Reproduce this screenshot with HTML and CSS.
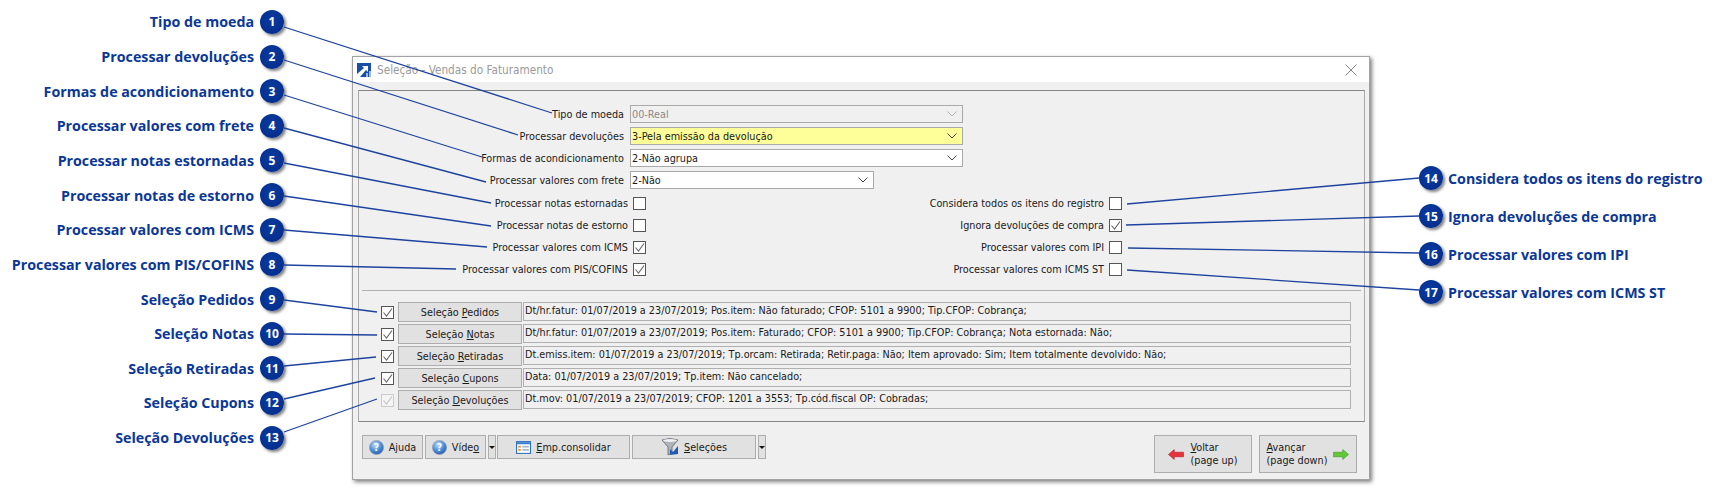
FILE: index.html
```html
<!DOCTYPE html>
<html lang="pt-BR">
<head>
<meta charset="utf-8">
<title>Seleção - Vendas do Faturamento</title>
<link rel="stylesheet" href="styles.css">
</head>
<body>
<div class="page">
  <div class="callouts-left">
    <div class="callout"><span class="callout-text">Tipo de moeda</span><span class="badge">1</span></div>
    <div class="callout"><span class="callout-text">Processar devoluções</span><span class="badge">2</span></div>
    <div class="callout"><span class="callout-text">Formas de acondicionamento</span><span class="badge">3</span></div>
    <div class="callout"><span class="callout-text">Processar valores com frete</span><span class="badge">4</span></div>
    <div class="callout"><span class="callout-text">Processar notas estornadas</span><span class="badge">5</span></div>
    <div class="callout"><span class="callout-text">Processar notas de estorno</span><span class="badge">6</span></div>
    <div class="callout"><span class="callout-text">Processar valores com ICMS</span><span class="badge">7</span></div>
    <div class="callout"><span class="callout-text">Processar valores com PIS/COFINS</span><span class="badge">8</span></div>
    <div class="callout"><span class="callout-text">Seleção Pedidos</span><span class="badge">9</span></div>
    <div class="callout"><span class="callout-text">Seleção Notas</span><span class="badge">10</span></div>
    <div class="callout"><span class="callout-text">Seleção Retiradas</span><span class="badge">11</span></div>
    <div class="callout"><span class="callout-text">Seleção Cupons</span><span class="badge">12</span></div>
    <div class="callout"><span class="callout-text">Seleção Devoluções</span><span class="badge">13</span></div>
  </div>

  <div class="dialog">
    <div class="titlebar">
      <svg class="app-icon" viewBox="0 0 14 14"><rect width="14" height="14" fill="#1a4fa8"/><path d="M0 14 L0 11 L7 5 L5 3 L11 3 L11 9 L9 7 L3 14Z" fill="#fff"/><rect x="9" y="10" width="2" height="4" fill="#9db8dc"/><rect x="12" y="8" width="2" height="6" fill="#9db8dc"/></svg>
      <span class="title-text">Seleção - Vendas do Faturamento</span>
      <svg class="close-icon" viewBox="0 0 12 12"><path d="M0.5 0.5 L11.5 11.5 M11.5 0.5 L0.5 11.5" stroke="#8a8a8a" stroke-width="1" fill="none"/></svg>
    </div>
    <div class="panel">
      <div class="form-row">
        <span class="label w-main">Tipo de moeda</span>
        <div class="combo combo-disabled"><span>00-Real</span><svg class="chev" viewBox="0 0 10 6"><path d="M0.5 0.5 L5 5 L9.5 0.5" stroke="#b0b0b0" fill="none"/></svg></div>
      </div>
      <div class="form-row">
        <span class="label w-main">Processar devoluções</span>
        <div class="combo combo-yellow"><span>3-Pela emissão da devolução</span><svg class="chev" viewBox="0 0 10 6"><path d="M0.5 0.5 L5 5 L9.5 0.5" stroke="#444" fill="none"/></svg></div>
      </div>
      <div class="form-row">
        <span class="label w-main">Formas de acondicionamento</span>
        <div class="combo"><span>2-Não agrupa</span><svg class="chev" viewBox="0 0 10 6"><path d="M0.5 0.5 L5 5 L9.5 0.5" stroke="#444" fill="none"/></svg></div>
      </div>
      <div class="form-row form-row-last">
        <span class="label w-main">Processar valores com frete</span>
        <div class="combo combo-short"><span>2-Não</span><svg class="chev" viewBox="0 0 10 6"><path d="M0.5 0.5 L5 5 L9.5 0.5" stroke="#444" fill="none"/></svg></div>
      </div>

      <div class="check-row">
        <div class="pair pair-left"><span class="label">Processar notas estornadas</span><span class="box"></span></div>
        <div class="pair pair-right"><span class="label">Considera todos os itens do registro</span><span class="box"></span></div>
      </div>
      <div class="check-row">
        <div class="pair pair-left"><span class="label">Processar notas de estorno</span><span class="box"></span></div>
        <div class="pair pair-right"><span class="label">Ignora devoluções de compra</span><span class="box"><svg class="tick" viewBox="0 0 11 11"><path d="M1.5 5.5 L4.5 9 L10 1.5" stroke="#666" stroke-width="1.1" fill="none"/></svg></span></div>
      </div>
      <div class="check-row">
        <div class="pair pair-left"><span class="label">Processar valores com ICMS</span><span class="box"><svg class="tick" viewBox="0 0 11 11"><path d="M1.5 5.5 L4.5 9 L10 1.5" stroke="#666" stroke-width="1.1" fill="none"/></svg></span></div>
        <div class="pair pair-right"><span class="label">Processar valores com IPI</span><span class="box"></span></div>
      </div>
      <div class="check-row">
        <div class="pair pair-left"><span class="label">Processar valores com PIS/COFINS</span><span class="box"><svg class="tick" viewBox="0 0 11 11"><path d="M1.5 5.5 L4.5 9 L10 1.5" stroke="#666" stroke-width="1.1" fill="none"/></svg></span></div>
        <div class="pair pair-right"><span class="label">Processar valores com ICMS ST</span><span class="box"></span></div>
      </div>

      <div class="separator"></div>

      <div class="sel-row">
        <span class="box"><svg class="tick" viewBox="0 0 11 11"><path d="M1.5 5.5 L4.5 9 L10 1.5" stroke="#666" stroke-width="1.1" fill="none"/></svg></span>
        <button class="sel-btn">Seleção <u>P</u>edidos</button>
        <div class="sel-field">Dt/hr.fatur: 01/07/2019 a 23/07/2019; Pos.item: Não faturado; CFOP: 5101 a 9900; Tip.CFOP: Cobrança;</div>
      </div>
      <div class="sel-row">
        <span class="box"><svg class="tick" viewBox="0 0 11 11"><path d="M1.5 5.5 L4.5 9 L10 1.5" stroke="#666" stroke-width="1.1" fill="none"/></svg></span>
        <button class="sel-btn">Seleção <u>N</u>otas</button>
        <div class="sel-field">Dt/hr.fatur: 01/07/2019 a 23/07/2019; Pos.item: Faturado; CFOP: 5101 a 9900; Tip.CFOP: Cobrança; Nota estornada: Não;</div>
      </div>
      <div class="sel-row">
        <span class="box"><svg class="tick" viewBox="0 0 11 11"><path d="M1.5 5.5 L4.5 9 L10 1.5" stroke="#666" stroke-width="1.1" fill="none"/></svg></span>
        <button class="sel-btn">Seleção <u>R</u>etiradas</button>
        <div class="sel-field">Dt.emiss.item: 01/07/2019 a 23/07/2019; Tp.orcam: Retirada; Retir.paga: Não; Item aprovado: Sim; Item totalmente devolvido: Não;</div>
      </div>
      <div class="sel-row">
        <span class="box"><svg class="tick" viewBox="0 0 11 11"><path d="M1.5 5.5 L4.5 9 L10 1.5" stroke="#666" stroke-width="1.1" fill="none"/></svg></span>
        <button class="sel-btn">Seleção <u>C</u>upons</button>
        <div class="sel-field">Data: 01/07/2019 a 23/07/2019; Tp.item: Não cancelado;</div>
      </div>
      <div class="sel-row">
        <span class="box box-disabled"><svg class="tick" viewBox="0 0 11 11"><path d="M1.5 5.5 L4.5 9 L10 1.5" stroke="#c4c4c4" stroke-width="1.1" fill="none"/></svg></span>
        <button class="sel-btn">Seleção <u>D</u>evoluções</button>
        <div class="sel-field">Dt.mov: 01/07/2019 a 23/07/2019; CFOP: 1201 a 3553; Tp.cód.fiscal OP: Cobradas;</div>
      </div>
    </div>

    <div class="toolbar">
      <button class="tool w-help"><svg class="ico" viewBox="0 0 16 16"><defs><radialGradient id="hg" cx="40%" cy="30%" r="70%"><stop offset="0" stop-color="#bcdcf8"/><stop offset="0.6" stop-color="#4f8fd8"/><stop offset="1" stop-color="#2a5fae"/></radialGradient></defs><circle cx="8" cy="8" r="7.5" fill="url(#hg)" stroke="#8a9db8" stroke-width="0.8"/><text x="8" y="12" text-anchor="middle" class="q">?</text></svg><span>A<u>j</u>uda</span></button>
      <button class="tool w-help"><svg class="ico" viewBox="0 0 16 16"><circle cx="8" cy="8" r="7.5" fill="url(#hg)" stroke="#8a9db8" stroke-width="0.8"/><text x="8" y="12" text-anchor="middle" class="q">?</text></svg><span>Víde<u>o</u></span></button>
      <button class="tool-arrow"><span class="tri"></span></button>
      <button class="tool w-emp"><svg class="ico" viewBox="0 0 14 14"><rect x="0.5" y="1.5" width="13" height="11" fill="#fff" stroke="#2f6fc0"/><rect x="1" y="2" width="12" height="2" fill="#3a7fd0"/><rect x="2" y="5.5" width="2.5" height="1.5" fill="#e08a30"/><rect x="2" y="8.5" width="2.5" height="1.5" fill="#e08a30"/><rect x="6" y="5.5" width="6" height="1.5" fill="#9cb4d0"/><rect x="6" y="8.5" width="6" height="1.5" fill="#9cb4d0"/></svg><span><u>E</u>mp.consolidar</span></button>
      <button class="tool w-sel"><svg class="ico ico-lg" viewBox="0 0 18 18"><path d="M1 2 Q9 -1 17 2 L11 9 L11 15 L7 17 L7 9Z" fill="#aeb4ba" stroke="#5f666e" stroke-width="0.8"/><ellipse cx="9" cy="2.5" rx="7" ry="1.5" fill="#eef0f2"/><path d="M9 11 L12 14 L17 8 L17 16 L9 17Z" fill="#1f5bb0"/></svg><span><u>S</u>eleções</span></button>
      <button class="tool-arrow"><span class="tri"></span></button>
      <div class="spacer"></div>
      <button class="nav nav-back"><svg class="arrow" viewBox="0 0 18 12"><path d="M0.5 6 L7 0.5 L7 3.5 L17.5 3.5 L17.5 8.5 L7 8.5 L7 11.5Z" fill="#e8333a" stroke="#b02028" stroke-width="0.7"/></svg><span class="nav-text"><u>V</u>oltar<br>(page up)</span></button>
      <button class="nav nav-next"><span class="nav-text"><u>A</u>vançar<br>(page down)</span><svg class="arrow" viewBox="0 0 18 12"><path d="M17.5 6 L11 0.5 L11 3.5 L0.5 3.5 L0.5 8.5 L11 8.5 L11 11.5Z" fill="#62c83a" stroke="#3c9a20" stroke-width="0.7"/></svg></button>
    </div>
  </div>

  <div class="callouts-right">
    <div class="callout-r"><span class="badge">14</span><span class="callout-text">Considera todos os itens do registro</span></div>
    <div class="callout-r"><span class="badge">15</span><span class="callout-text">Ignora devoluções de compra</span></div>
    <div class="callout-r"><span class="badge">16</span><span class="callout-text">Processar valores com IPI</span></div>
    <div class="callout-r"><span class="badge">17</span><span class="callout-text">Processar valores com ICMS ST</span></div>
  </div>

  <svg class="leaders" viewBox="0 0 1718 490">
    <line x1="284" y1="27" x2="552" y2="113"/>
    <line x1="284" y1="60" x2="518" y2="135"/>
    <line x1="284" y1="95" x2="482" y2="157"/>
    <line x1="284" y1="128" x2="486" y2="182"/>
    <line x1="284" y1="163" x2="491" y2="203"/>
    <line x1="284" y1="196" x2="491" y2="226"/>
    <line x1="284" y1="230" x2="487" y2="247"/>
    <line x1="284" y1="265" x2="456" y2="269"/>
    <line x1="284" y1="300" x2="377" y2="312"/>
    <line x1="284" y1="334" x2="377" y2="335"/>
    <line x1="284" y1="366" x2="376" y2="357"/>
    <line x1="284" y1="399" x2="375" y2="378"/>
    <line x1="284" y1="432" x2="377" y2="399"/>
    <line x1="1127" y1="204" x2="1419" y2="178"/>
    <line x1="1126" y1="225" x2="1419" y2="216"/>
    <line x1="1128" y1="248" x2="1419" y2="253"/>
    <line x1="1127" y1="270" x2="1419" y2="290"/>
  </svg>
</div>
</body>
</html>
```

FILE: styles.css
```css
* { box-sizing: border-box; }
html, body { margin: 0; padding: 0; background: #fff; }
.page {
  position: relative;
  display: flex;
  align-items: flex-start;
  width: 1718px;
  height: 490px;
  overflow: hidden;
  font-family: "DejaVu Sans Condensed", "DejaVu Sans", sans-serif;
  font-stretch: condensed;
  font-size: 10.75px;
  color: #1a1a1a;
}
.callouts-left {
  width: 284px;
  padding-top: 10px;
  display: flex;
  flex-direction: column;
  gap: 10.9px;
  flex: none;
}
.callout {
  display: flex;
  justify-content: flex-end;
  align-items: center;
  gap: 6px;
  height: 23.75px;
}
.callout-r {
  display: flex;
  align-items: center;
  gap: 5px;
  height: 24px;
}
.callout-text {
  font-family: "Open Sans", sans-serif;
  font-stretch: normal;
  font-weight: 700;
  font-size: 14.25px;
  color: #0b3797;
  white-space: nowrap;
}
.badge {
  flex: none;
  width: 24px;
  height: 24px;
  border-radius: 50%;
  background: radial-gradient(circle at 45% 40%, #0a3ba0, #022a88);
  color: #fff;
  font-family: "Open Sans", sans-serif;
  font-stretch: normal;
  font-weight: 700;
  font-size: 12px;
  display: flex;
  align-items: center;
  justify-content: center;
  box-shadow: 2px 2px 3px rgba(0, 0, 0, 0.5);
}
.dialog {
  flex: none;
  width: 1018px;
  height: 424px;
  margin: 56px 0 0 68px;
  background: #f0f0f0;
  border: 1px solid #a2a2a2;
  box-shadow: 2px 2px 4px rgba(0, 0, 0, 0.5);
  display: flex;
  flex-direction: column;
}
.titlebar {
  flex: none;
  height: 25px;
  background: #fff;
  display: flex;
  align-items: center;
  padding: 0 9px 0 4px;
  gap: 6px;
}
.app-icon { width: 14px; height: 14px; flex: none; }
.title-text {
  font-size: 11.7px;
  color: #9a9a9a;
  flex: 1;
}
.close-icon { width: 12px; height: 12px; flex: none; margin-right: 3px; }
.panel {
  flex: none;
  height: 332px;
  margin: 8px 4px 0 5px;
  padding: 14px 0 0 0;
  border: 1px solid #aaa;
  border-top-color: #858585;
  border-bottom-color: #858585;
}
.form-row {
  display: flex;
  align-items: center;
  height: 18px;
  margin-bottom: 4px;
  gap: 6px;
}
.form-row-last { margin-bottom: 3px; }
.label { white-space: nowrap; text-align: right; }
.w-main { width: 265px; flex: none; }
.combo {
  width: 333px;
  height: 18px;
  background: #fff;
  border: 1px solid #a9a9a9;
  display: flex;
  align-items: center;
  justify-content: space-between;
  padding: 0 4px 0 1px;
}
.combo-disabled { background: #f0f0f0; color: #8a8a8a; }
.combo-yellow { background: #ffff99; }
.combo-short { width: 244px; }
.chev { width: 10px; height: 6px; margin-right: 1px; }
.check-row {
  display: flex;
  align-items: center;
  height: 22px;
}
.pair {
  display: flex;
  align-items: center;
  justify-content: flex-end;
  gap: 5px;
}
.pair-left { width: 287px; flex: none; }
.pair-right { width: 476px; flex: none; }
.box {
  flex: none;
  width: 13px;
  height: 13px;
  background: #fff;
  border: 1px solid #555;
  display: flex;
  align-items: center;
  justify-content: center;
}
.box-disabled { border-color: #ccc; background: #f4f4f4; }
.tick { width: 11px; height: 11px; display: block; }
.separator {
  height: 1px;
  background: #b0b0b0;
  margin: 10px 3px 11px 3px;
}
.sel-row {
  display: flex;
  align-items: center;
  height: 20px;
  margin-bottom: 2px;
  padding-left: 22px;
}
.sel-btn {
  flex: none;
  width: 124px;
  height: 20px;
  margin-left: 4px;
  background: #e1e1e1;
  border: 1px solid #adadad;
  font: inherit;
  color: inherit;
  padding: 0;
}
.sel-field {
  width: 828px;
  height: 19px;
  margin-left: 1px;
  align-self: flex-start;
  border: 1px solid #b0b0b0;
  padding: 0 1px;
  line-height: 15px;
  white-space: nowrap;
}
.toolbar {
  flex: 1;
  display: flex;
  align-items: flex-start;
  padding: 13px 12px 0 9px;
  gap: 2px;
}
.tool, .tool-arrow, .nav {
  font: inherit;
  color: inherit;
  background: #e1e1e1;
  border: 1px solid #adadad;
  padding: 0;
  display: flex;
  align-items: center;
  justify-content: center;
  flex: none;
}
.tool { height: 24px; gap: 5px; }
.w-help { width: 61px; }
.w-emp { width: 133px; margin-left: -1px; }
.w-sel { width: 124px; }
.tool-arrow { width: 8px; height: 24px; }
.tri {
  width: 0;
  height: 0;
  border-left: 3px solid transparent;
  border-right: 3px solid transparent;
  border-top: 3px solid #111;
}
.ico { width: 15px; height: 15px; flex: none; }
.ico-lg { width: 18px; height: 18px; }
.q { font-family: "DejaVu Sans", sans-serif; font-size: 11px; font-weight: 700; fill: #fff; }
.spacer { flex: 1; }
.nav {
  width: 98px;
  height: 38px;
  gap: 6px;
}
.nav-back { margin-right: 5px; }
.nav-text { text-align: left; line-height: 13px; }
.arrow { width: 16px; height: 11px; flex: none; }
.callouts-right {
  flex: none;
  margin: 166px 0 0 49px;
  display: flex;
  flex-direction: column;
  gap: 14px;
}
.leaders {
  position: absolute;
  left: 0;
  top: 0;
  width: 1718px;
  height: 490px;
  pointer-events: none;
}
.leaders line {
  stroke: #1e439f;
  stroke-width: 1.3;
}
```
